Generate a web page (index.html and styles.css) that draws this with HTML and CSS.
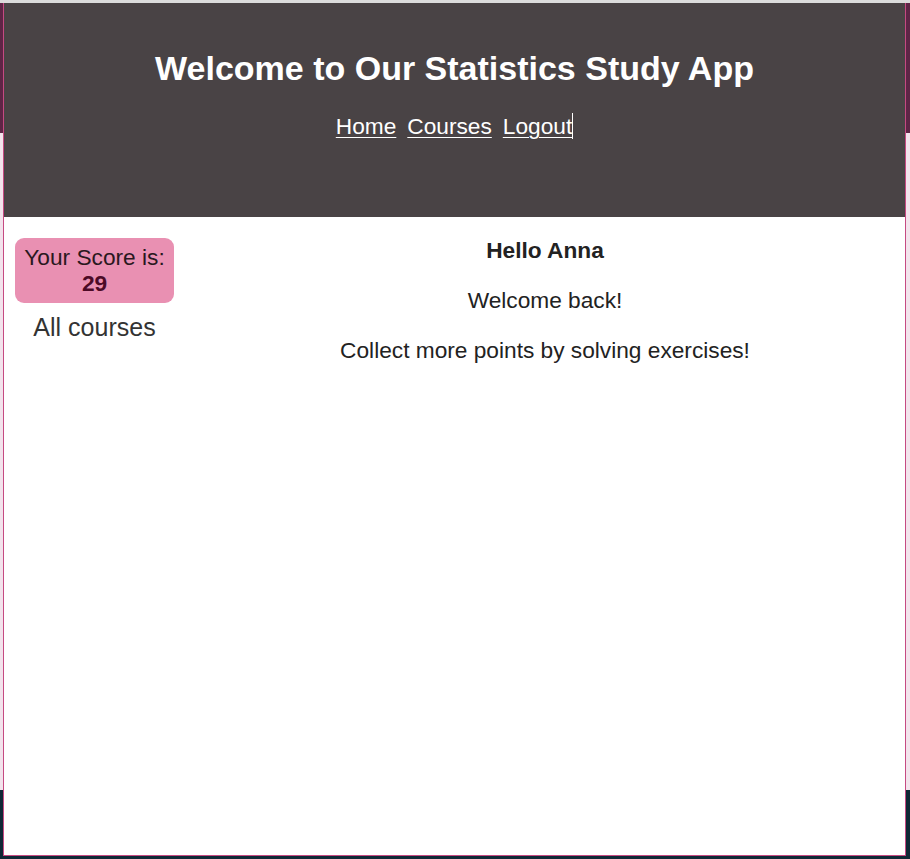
FILE: index.html
```html
<!DOCTYPE html>
<html lang="en">
<head>
<meta charset="utf-8">
<title>Statistics Study App</title>
<link rel="stylesheet" href="styles.css">
</head>
<body>
<div class="window">
  <header class="header">
    <h1 class="title">Welcome to Our Statistics Study App</h1>
    <nav class="nav">
      <a class="nav-link" href="#">Home</a>
      <a class="nav-link" href="#">Courses</a>
      <a class="nav-link" href="#">Logout</a><span class="caret"></span>
    </nav>
  </header>
  <div class="content">
    <aside class="sidebar">
      <div class="score">
        <div>Your Score is:</div>
        <div class="score-value">29</div>
      </div>
      <div class="all-courses">All courses</div>
    </aside>
    <main class="main">
      <p class="hello">Hello Anna</p>
      <p class="msg">Welcome back!</p>
      <p class="msg">Collect more points by solving exercises!</p>
    </main>
  </div>
</div>
</body>
</html>
```
FILE: styles.css
```css
html, body {
  margin: 0;
  height: 859px;
  overflow: hidden;
}
body {
  padding: 3px 4px 3px 3px;
  box-sizing: border-box;
  background: linear-gradient(to bottom, #dcdcdc 0 3px, #5e2546 3px 133px, #f3e3ec 133px 790px, #0f2836 790px 100%);
  font-family: "Liberation Sans", Arial, sans-serif;
}
.window {
  box-sizing: border-box;
  height: 853px;
  border: 1px solid #c64a82;
  border-top: none;
  background: #ffffff;
  display: flex;
  flex-direction: column;
}
.header {
  background: #494345;
  padding: 46px 0 78px;
  text-align: center;
  color: #ffffff;
}
.title {
  margin: 0;
  font-size: 34px;
  line-height: 39px;
  font-weight: bold;
}
.nav {
  margin-top: 25px;
  display: flex;
  justify-content: center;
  align-items: center;
  gap: 11px;
  font-size: 22.7px;
  line-height: 26px;
}
.nav-link {
  color: #ffffff;
  text-decoration: underline;
  text-underline-offset: 3px;
  text-decoration-thickness: 1px;
}
.caret {
  width: 1px;
  height: 26px;
  background: #ffffff;
  margin-left: -11px;
}
.content {
  display: flex;
  flex: 1;
}
.sidebar {
  width: 181px;
  flex: none;
  padding: 21px 11px 0;
  box-sizing: border-box;
  text-align: center;
  font-size: 22.7px;
  line-height: 26px;
}
.score {
  background: #e990b2;
  border-radius: 9px;
  padding: 6px 0 7px;
  color: #2a1820;
}
.score-value {
  font-weight: bold;
  color: #4c0a26;
}
.all-courses {
  margin-top: 10px;
  font-size: 25px;
  line-height: 28px;
  color: #333333;
}
.main {
  flex: 1;
  text-align: center;
  padding-top: 20px;
  font-size: 22.7px;
  line-height: 26px;
  color: #222222;
}
.main p {
  margin: 0 0 24px;
}
.hello {
  font-weight: bold;
}
```
